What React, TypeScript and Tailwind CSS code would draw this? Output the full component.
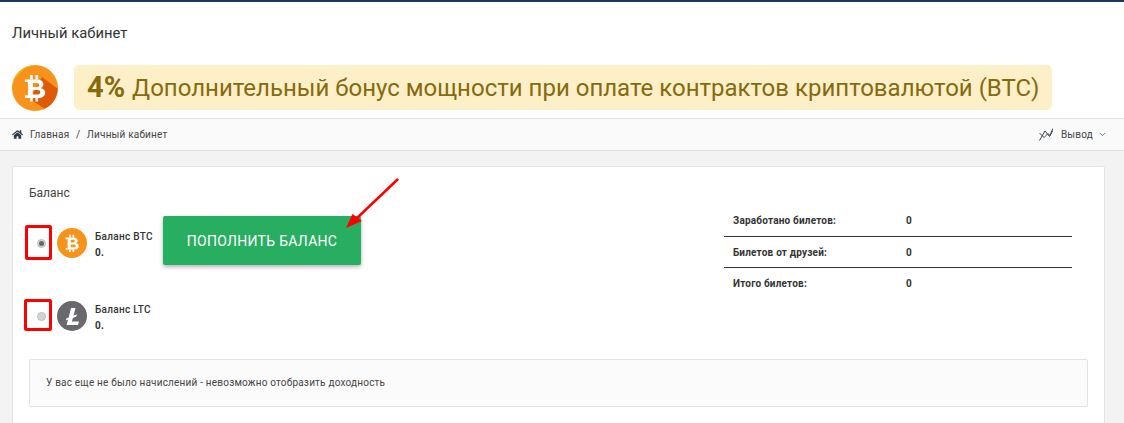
import React from "react";
import { FaHome } from "react-icons/fa";
import { ChevronDown } from "lucide-react";

const BtcLogo = ({ size, big }: { size: number; big?: boolean }) => (
  <div className="relative shrink-0 rounded-full overflow-hidden bg-[#f7931a] flex items-center justify-center" style={{ width: size, height: size }}>
    {big && (
      <svg viewBox="0 0 46 46" className="absolute inset-0 w-full h-full">
        <path d="M0 23 A23 23 0 0 1 23 0 L13 3 L3 13 Z" fill="#fdb813" />
        <path d="M30 12 L46 24 A23 23 0 0 1 33 44 L18 34 Z" fill="#dd5a08" />
      </svg>
    )}
    <svg viewBox="0 0 24 30" className="relative" style={{ width: size * 0.46, height: size * 0.62 }}>
      <path
        fill="#fff"
        fillRule="evenodd"
        d="M1 5 H15 C20 5 22 8 22 10.5 C22 12.5 21 14 19 14.8 C22 15.5 24 17.5 24 20 C24 23.5 21 26 16 26 H1 V23 H4.5 V8 H1 Z M10 9 V13.5 H14.5 C16.5 13.5 17 12.5 17 11.2 C17 10 16.2 9 14.5 9 Z M10 17 V22 H15.5 C17.5 22 18.5 21 18.5 19.5 C18.5 18 17.5 17 15.5 17 Z"
      />
      <path fill="#fff" d="M7 0 H10 V5 H7 Z M13 0 H16 V5 H13 Z M7 26 H10 V30 H7 Z M13 26 H16 V30 H13 Z" />
    </svg>
  </div>
);

const LtcLogo = () => (
  <div className="shrink-0 w-[30px] h-[30px] rounded-full bg-[#68686d]">
    <svg viewBox="0 0 30 30" className="w-full h-full">
      <path d="M14 7 H18.5 L16.5 14.5 L20 13.2 L19.4 15.6 L15.9 16.9 L14.9 20.4 H22 L21 24 H9.5 L11.1 18.6 L8.8 19.4 L9.3 17.4 L11.7 16.6 Z" fill="#fff" />
    </svg>
  </div>
);

const Radio = ({ checked }: { checked?: boolean }) => (
  <div className="shrink-0 w-[9px] h-[9px] rounded-full bg-[#d4d4d4] border border-[#bdbdbd] flex items-center justify-center">
    {checked && <div className="w-[5px] h-[5px] rounded-full bg-[#666]" />}
  </div>
);

const Balance = ({ name, checked, logo }: { name: string; checked?: boolean; logo: React.ReactNode }) => (
  <div className="flex items-center h-[30px]">
    <div className="w-[17px] flex justify-end"><Radio checked={checked} /></div>
    <div className="w-[11px]" />
    {logo}
    <div className="ml-[8px] mt-[4px] text-[10px] font-medium text-[#333] tracking-[0.3px]">
      <div className="leading-[12px]">{name}</div>
      <div className="leading-[12px] mt-[4px] font-bold">0.</div>
    </div>
  </div>
);

const StatRow = ({ label, border, first }: { label: string; border?: boolean; first?: boolean }) => (
  <div className={"flex items-center h-[31px] pl-[9px] text-[10px] font-bold text-[#333] tracking-[0.2px] " + (border ? "border-b border-[#333] " : "") + (first ? "pb-[2px]" : "")}>
    <div className="w-[173px]">{label}</div>
    <div>0</div>
  </div>
);

export default function App() {
  return (
    <div className="relative w-[1124px] h-[423px] overflow-hidden bg-[#f3f3f3] text-[#333]" style={{ fontFamily: "Roboto, sans-serif" }}>
      <header className="bg-white border-t-2 border-[#17375e] h-[118px] px-[12px] pt-[21px]">
        <h1 className="text-[14.8px] leading-[20px] text-[#333] font-normal">Личный кабинет</h1>
        <div className="flex items-start mt-[22px]">
          <BtcLogo size={46} big />
          <div className="ml-[16px] h-[45px] w-[978px] rounded-[5px] bg-[#fdf0c8] flex items-center pl-[13px] text-[#866a0c] text-[24px] whitespace-nowrap">
            <span className="font-bold text-[29px] mr-[7px]">4%</span>
            <span>Дополнительный бонус мощности при оплате контрактов криптовалютой (BTC)</span>
          </div>
        </div>
      </header>

      <nav className="h-[33px] bg-[#fafafa] border-y border-[#e2e2e2] pl-[12px] pr-[17px] flex items-center justify-between text-[10px] text-[#444] tracking-[0.2px]">
        <div className="flex items-center">
          <FaHome className="w-[11px] h-[11px] text-[#2b3b4a]" />
          <span className="ml-[7px]">Главная</span>
          <span className="mx-[6.5px]">/</span>
          <span>Личный кабинет</span>
        </div>
        <div className="flex items-center">
          <svg viewBox="0 0 14 13" className="w-[14px] h-[13px]" fill="none" stroke="#3a3f4a" strokeWidth="1">
            <path d="M0.5 12.5 L6 3 L10.5 8.5 L13.8 2.5" />
            <path d="M0.5 5 L5 9.5 L9 5.5 L11 7.5 L13.8 0.5" />
          </svg>
          <span className="ml-[8px]">Вывод</span>
          <ChevronDown className="ml-[5px] w-[9px] h-[9px]" strokeWidth={2} />
        </div>
      </nav>

      <main className="pt-[15px] pl-[12px]">
        <section className="w-[1093px] h-[300px] bg-white border border-[#e4e4e4] rounded-[2px] pl-[16px] pr-[16px] pt-[18px]">
          <div className="text-[12px] leading-[16px] text-[#444]">Баланс</div>
          <div className="flex h-[158px]">
            <div className="relative w-[334px]">
              <div className="pt-[27px]">
                <Balance name="Баланс BTC" checked logo={<BtcLogo size={30} />} />
              </div>
              <div className="pt-[43px]">
                <Balance name="Баланс LTC" logo={<LtcLogo />} />
              </div>
              <button className="absolute left-[134px] top-[15px] w-[198px] h-[49px] pt-[1px] rounded-[2px] bg-[#27ae60] text-white text-[14px] tracking-[0.3px] shadow-[0_2px_4px_rgba(0,0,0,0.3)]">
                ПОПОЛНИТЬ БАЛАНС
              </button>
            </div>
            <div className="ml-[361px] w-[348px] pt-[5px]">
              <StatRow label="Заработано билетов:" border first />
              <StatRow label="Билетов от друзей:" border />
              <StatRow label="Итого билетов:" />
            </div>
          </div>
          <div className="w-[1059px] h-[48px] pb-[1px] bg-[#fbfbfb] border border-[#e2e2e2] rounded-[2px] flex items-center pl-[16px] text-[10px] text-[#444] tracking-[0.2px]">
            У вас еще не было начислений - невозможно отобразить доходность
          </div>
        </section>
      </main>

      <div className="absolute left-[25px] top-[225px] w-[27px] h-[35px] border-[3px] border-[#f00] rounded-[2px]" />
      <div className="absolute left-[24px] top-[299px] w-[28px] h-[32px] border-[3px] border-[#f00] rounded-[2px]" />
      <svg className="absolute left-[340px] top-[175px] w-[62px] h-[60px]" viewBox="0 0 62 60">
        <path d="M57.5 4.5 L16 44" stroke="#f00" strokeWidth="2.5" strokeLinecap="round" />
        <path d="M6 53 L12.5 39 L22 46 Z" fill="#f00" />
      </svg>
    </div>
  );
}
